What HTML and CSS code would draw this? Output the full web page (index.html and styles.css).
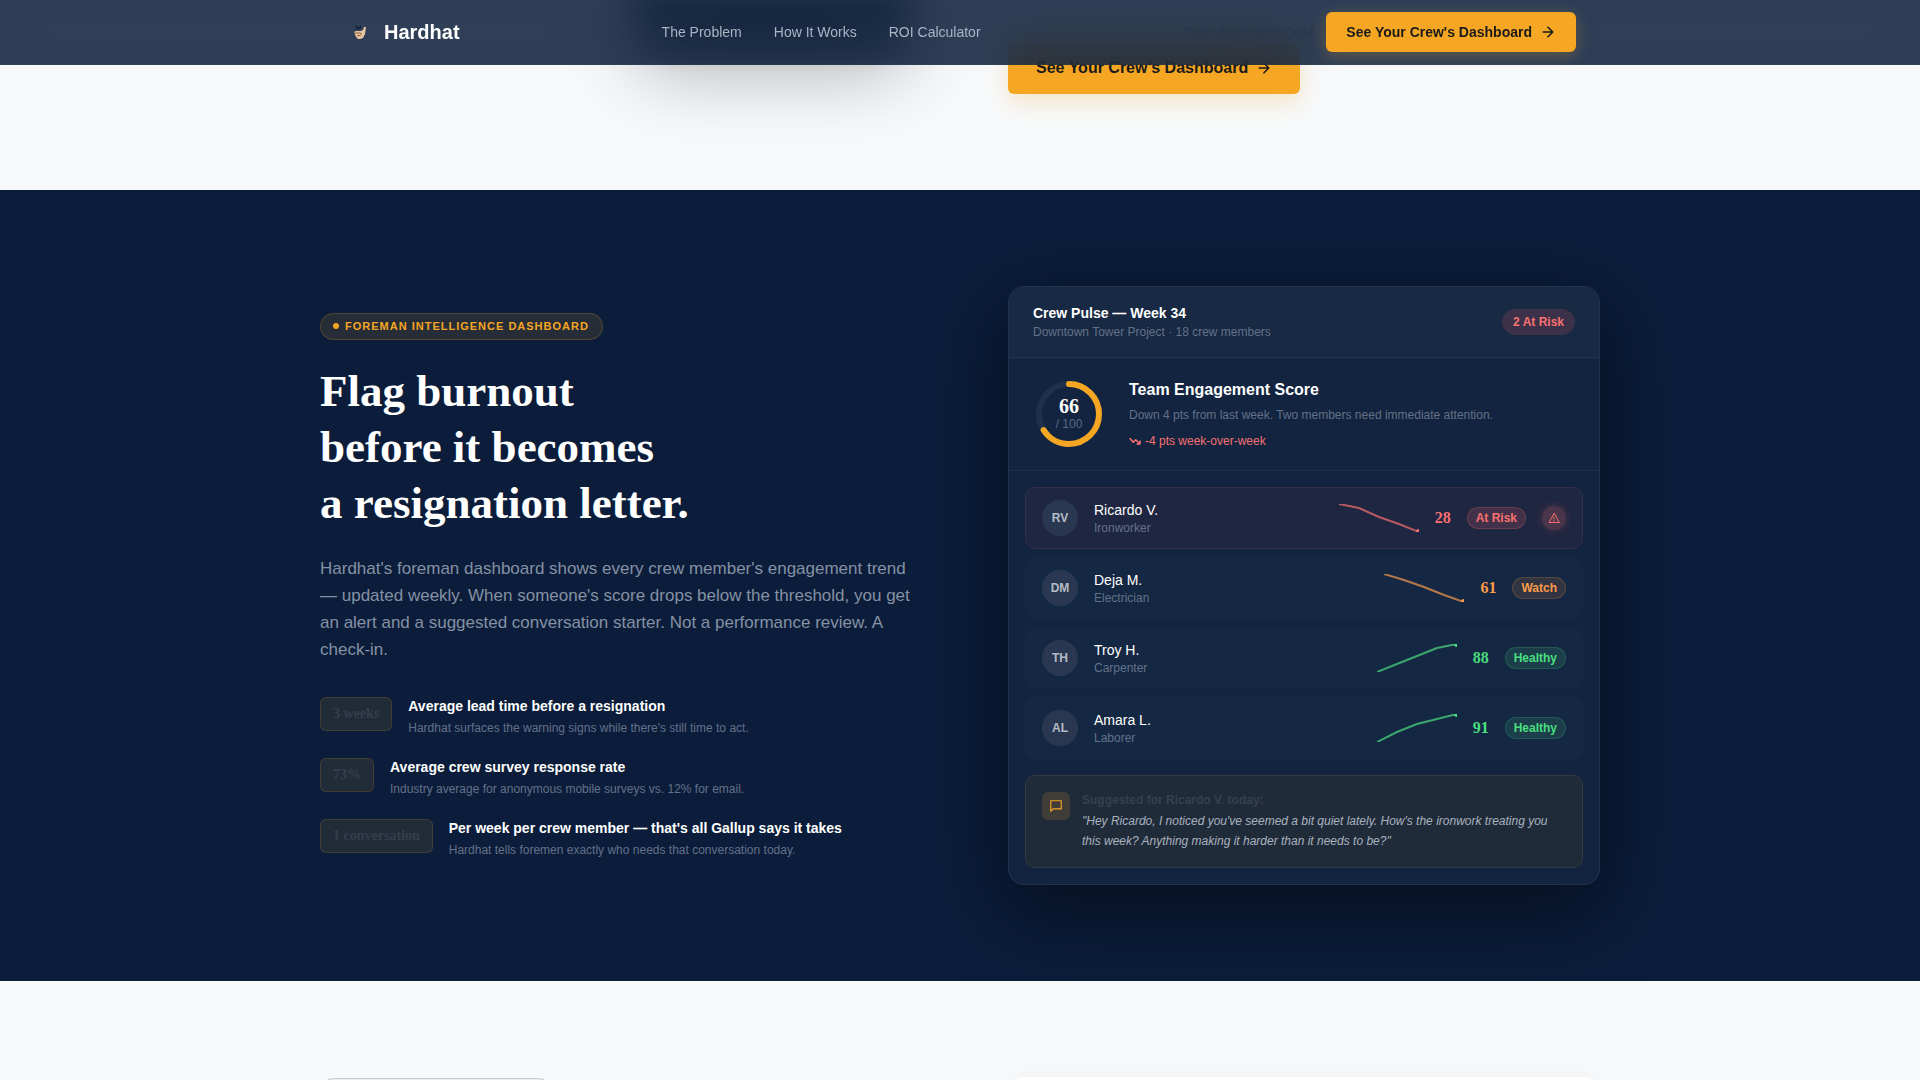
FILE: index.html
```html
<!DOCTYPE html>
<html lang="en">
<head>
    <meta charset="UTF-8">
    <meta name="viewport" content="width=device-width, initial-scale=1.0">
    <title>Hardhat</title>
    <link rel="stylesheet" href="styles.css">
</head>
<body>

    <!-- Navigation -->
    <header class="navbar">
        <div class="navbar-inner">
            <a class="logo" href="#">
                <span class="logo-mark">
                    <svg width="14" height="14" viewBox="0 0 14 14" aria-hidden="true">
                        <path d="M3 1l2 3M8 1L6 4" stroke="#15233d" stroke-width="2"/>
                        <path d="M1 7l2-1h5l2-1 1-3h2l-1 7-2 4-3 1H5l-2-2z" fill="#e9c4a0"/>
                        <path d="M1 8h6l2 1M4 11l4-1" stroke="#8a5f45" stroke-width="1" fill="none"/>
                    </svg>
                </span>
                Hardhat
            </a>
            <nav class="nav-links">
                <a href="#problem">The Problem</a>
                <a href="#how">How It Works</a>
                <a href="#roi">ROI Calculator</a>
            </nav>
            <div class="nav-actions">
                <a class="nav-cost" href="#cost">Calculate Your Cost</a>
                <button class="btn btn-small" type="button">
                    See Your Crew's Dashboard
                    <svg class="icon" width="16" height="16" viewBox="0 0 20 20"><path d="M4 10h12M10 4l6 6-6 6"/></svg>
                </button>
            </div>
        </div>
    </header>

    <!-- End of the survey section -->
    <section class="survey">
        <div class="container survey-grid">
            <div class="phone-wrap"><div class="phone"></div></div>
            <div>
                <button class="btn btn-large" type="button">
                    See Your Crew's Dashboard
                    <svg class="icon" width="16" height="16" viewBox="0 0 20 20"><path d="M4 10h12M10 4l6 6-6 6"/></svg>
                </button>
            </div>
        </div>
    </section>

    <!-- Foreman dashboard -->
    <section class="foreman" id="how">
        <div class="container foreman-grid">
            <div>
                <span class="eyebrow">Foreman Intelligence Dashboard</span>
                <h2>Flag burnout<br>before it becomes<br>a resignation letter.</h2>
                <p class="lead">Hardhat's foreman dashboard shows every crew member's engagement trend — updated weekly. When someone's score drops below the threshold, you get an alert and a suggested conversation starter. Not a performance review. A check-in.</p>
                <ul class="stats">
                    <li>
                        <span class="stat-value">3 weeks</span>
                        <div>
                            <h3>Average lead time before a resignation</h3>
                            <p>Hardhat surfaces the warning signs while there's still time to act.</p>
                        </div>
                    </li>
                    <li>
                        <span class="stat-value">73%</span>
                        <div>
                            <h3>Average crew survey response rate</h3>
                            <p>Industry average for anonymous mobile surveys vs. 12% for email.</p>
                        </div>
                    </li>
                    <li>
                        <span class="stat-value">1 conversation</span>
                        <div>
                            <h3>Per week per crew member — that's all Gallup says it takes</h3>
                            <p>Hardhat tells foremen exactly who needs that conversation today.</p>
                        </div>
                    </li>
                </ul>
            </div>

            <div class="pulse">
                <div class="pulse-head">
                    <div>
                        <h3>Crew Pulse — Week 34</h3>
                        <p>Downtown Tower Project · 18 crew members</p>
                    </div>
                    <span class="risk-count">2 At Risk</span>
                </div>

                <div class="score">
                    <div class="ring">
                        <svg width="70" height="70" viewBox="0 0 70 70">
                            <circle class="ring-track" cx="35" cy="35" r="30"/>
                            <circle class="ring-value" cx="35" cy="35" r="30" pathLength="100" stroke-dasharray="66 100" transform="rotate(-90 35 35)"/>
                        </svg>
                        <div class="ring-label"><strong>66</strong><span>/ 100</span></div>
                    </div>
                    <div>
                        <h3>Team Engagement Score</h3>
                        <p>Down 4 pts from last week. Two members need immediate attention.</p>
                        <div class="trend">
                            <svg class="icon" width="12" height="12" viewBox="0 0 24 24"><path d="M22 18l-8.500-8.500-5 5L2 7M16 18h6v-6"/></svg>
                            -4 pts week-over-week
                        </div>
                    </div>
                </div>

                <ul class="crew">
                    <li class="member risk">
                        <span class="avatar">RV</span>
                        <div class="who"><b>Ricardo V.</b><small>Ironworker</small></div>
                        <svg class="spark" width="80" height="28" viewBox="0 0 80 28">
                            <polyline points="0,0 20,4 40,13 60,20 80,28"/>
                            <circle cx="80" cy="28" r="3"/>
                        </svg>
                        <span class="points">28</span>
                        <span class="tag">At Risk</span>
                        <span class="alert">
                            <svg class="icon" width="12" height="12" viewBox="0 0 24 24"><path d="M12 3L2 21h20zM12 10v4M12 17v1"/></svg>
                        </span>
                    </li>
                    <li class="member watch">
                        <span class="avatar">DM</span>
                        <div class="who"><b>Deja M.</b><small>Electrician</small></div>
                        <svg class="spark" width="80" height="28" viewBox="0 0 80 28">
                            <polyline points="0,0 20,6 40,13 60,21 80,28"/>
                            <circle cx="80" cy="28" r="3"/>
                        </svg>
                        <span class="points">61</span>
                        <span class="tag">Watch</span>
                    </li>
                    <li class="member healthy">
                        <span class="avatar">TH</span>
                        <div class="who"><b>Troy H.</b><small>Carpenter</small></div>
                        <svg class="spark" width="80" height="28" viewBox="0 0 80 28">
                            <polyline points="0,28 20,20 40,12 60,4 80,0"/>
                            <circle cx="80" cy="0" r="3"/>
                        </svg>
                        <span class="points">88</span>
                        <span class="tag">Healthy</span>
                    </li>
                    <li class="member healthy">
                        <span class="avatar">AL</span>
                        <div class="who"><b>Amara L.</b><small>Laborer</small></div>
                        <svg class="spark" width="80" height="28" viewBox="0 0 80 28">
                            <polyline points="0,28 20,18 40,10 60,5 80,0"/>
                            <circle cx="80" cy="0" r="3"/>
                        </svg>
                        <span class="points">91</span>
                        <span class="tag">Healthy</span>
                    </li>
                </ul>

                <div class="suggestion">
                    <span class="suggestion-icon">
                        <svg class="icon" width="14" height="14" viewBox="0 0 24 24"><path d="M21 3H3v18l4-4h14z"/></svg>
                    </span>
                    <div>
                        <h4>Suggested for Ricardo V. today:</h4>
                        <p>"Hey Ricardo, I noticed you've seemed a bit quiet lately. How's the ironwork treating you this week? Anything making it harder than it needs to be?"</p>
                    </div>
                </div>
            </div>
        </div>
    </section>

    <!-- ROI section -->
    <section class="roi" id="roi">
        <div class="container roi-grid">
            <div><div class="roi-pill"></div></div>
            <div class="roi-card"></div>
        </div>
    </section>

</body>
</html>
```
FILE: styles.css
```css
* {
    box-sizing: border-box;
    margin: 0;
    padding: 0;
}

body {
    height: 100vh;
    overflow: hidden;
    font-family: "Liberation Sans", Arial, sans-serif;
    background-color: #f7f9fb;
    color: #fff;
}

a {
    color: inherit;
    text-decoration: none;
}

ul {
    list-style: none;
}

.icon {
    flex-shrink: 0;
    fill: none;
    stroke: currentColor;
    stroke-width: 2;
    stroke-linecap: round;
    stroke-linejoin: round;
}

.container {
    max-width: 1280px;
    margin: 0 auto;
}

/* Navigation */
.navbar {
    position: fixed;
    top: 0;
    left: 0;
    right: 0;
    z-index: 10;
    background-color: rgba(11, 29, 58, 0.85);
    backdrop-filter: blur(20px);
    border-bottom: 1px solid rgba(255, 255, 255, 0.02);
}

.navbar-inner {
    display: flex;
    align-items: center;
    justify-content: space-between;
    max-width: 1280px;
    height: 64px;
    margin: 0 auto;
    padding: 0 24px;
}

.logo {
    display: flex;
    align-items: center;
    gap: 8px;
    font-size: 20px;
    font-weight: bold;
}

.logo-mark {
    display: flex;
    align-items: center;
    justify-content: center;
    width: 32px;
    height: 32px;
}

.nav-links {
    display: flex;
    gap: 32px;
    font-size: 14px;
    color: #a9b4c4;
}

.nav-actions {
    display: flex;
    align-items: center;
    gap: 12px;
}

.nav-cost {
    font-size: 14px;
    font-weight: bold;
    color: #2a384c;
}

.btn {
    display: flex;
    align-items: center;
    gap: 8px;
    border: none;
    border-radius: 6px;
    background-color: #f5a623;
    color: #1a1a1a;
    font-family: inherit;
    font-weight: bold;
    cursor: pointer;
}

.btn-small {
    height: 40px;
    padding: 0 20px;
    font-size: 14px;
    box-shadow: 0 4px 16px rgba(245, 166, 35, 0.25);
}

.btn-large {
    height: 52px;
    padding: 0 28px;
    font-size: 16px;
    box-shadow: 0 8px 24px rgba(245, 166, 35, 0.25);
}

/* Survey */
.survey {
    padding-bottom: 96px;
}

.survey-grid,
.foreman-grid,
.roi-grid {
    display: grid;
    grid-template-columns: 1fr 1fr;
    gap: 96px;
}

.survey-grid {
    align-items: end;
    height: 94px;
}

.phone-wrap {
    display: flex;
    justify-content: flex-end;
    height: 94px;
}

.phone {
    width: 280px;
    height: 44px;
    border-radius: 0 0 32px 32px;
    background-color: #3a4048;
    box-shadow: 0 20px 72px rgba(0, 0, 0, 0.4);
    filter: blur(14px);
}

/* Foreman dashboard */
.foreman {
    padding: 96px 0;
    overflow: hidden;
    background-color: #0b1d3a;
}

.foreman-grid {
    align-items: center;
}

.eyebrow {
    display: flex;
    align-items: center;
    gap: 6px;
    width: fit-content;
    height: 27px;
    padding: 0 13px 0 12px;
    border: 1px solid rgba(245, 166, 35, 0.2);
    border-radius: 14px;
    background-color: rgba(245, 166, 35, 0.12);
    color: #f5a623;
    font-size: 11px;
    font-weight: bold;
    letter-spacing: 1px;
    text-transform: uppercase;
}

.eyebrow::before {
    content: "";
    width: 6px;
    height: 6px;
    border-radius: 50%;
    background-color: #f5a623;
}

.foreman h2 {
    margin: 23px 0 24px;
    font-family: "Liberation Serif", "Times New Roman", serif;
    font-size: 45px;
    line-height: 56px;
}

.lead {
    color: #8591a4;
    font-size: 17px;
    line-height: 27px;
}

.stats {
    display: flex;
    flex-direction: column;
    gap: 20px;
    margin-top: 33px;
}

.stats li {
    display: flex;
    align-items: flex-start;
    gap: 16px;
}

.stat-value {
    height: 34px;
    margin-top: 1px;
    padding: 0 12px;
    border: 1px solid rgba(245, 166, 35, 0.15);
    border-radius: 6px;
    background-color: rgba(245, 166, 35, 0.1);
    color: #343e4c;
    font-family: "Liberation Serif", "Times New Roman", serif;
    font-size: 14px;
    font-weight: bold;
    line-height: 32px;
}

.stats h3 {
    font-size: 14px;
    line-height: 21px;
}

.stats p {
    margin-top: 2px;
    color: #63718a;
    font-size: 12px;
    line-height: 18px;
}

/* Crew pulse card */
.pulse {
    border: 1px solid #22334d;
    border-radius: 16px;
    background-color: #12243f;
    box-shadow: 0 24px 80px rgba(0, 0, 0, 0.5);
    overflow: hidden;
}

.pulse-head {
    display: flex;
    align-items: center;
    justify-content: space-between;
    padding: 16px 24px;
    border-bottom: 1px solid #22334d;
    background-color: #172943;
}

.pulse-head h3 {
    font-size: 14px;
    line-height: 21px;
}

.pulse-head p,
.score p {
    color: #63718a;
    font-size: 12px;
    line-height: 18px;
}

.pulse-head p {
    line-height: 17px;
}

.risk-count {
    padding: 0 10px;
    border: 1px solid #413349;
    border-radius: 13px;
    background-color: #3b3148;
    color: #f87171;
    font-size: 12px;
    font-weight: bold;
    line-height: 24px;
}

.score {
    display: flex;
    align-items: center;
    gap: 24px;
    padding: 20px 24px;
    border-bottom: 1px solid #1d2e49;
}

.ring {
    position: relative;
    width: 72px;
    height: 70px;
    text-align: center;
}

.ring circle {
    fill: none;
    stroke-width: 6;
}

.ring .ring-track {
    stroke: #1f304b;
}

.ring .ring-value {
    stroke: #f5a623;
    stroke-linecap: round;
}

.ring-label {
    position: absolute;
    inset: 0;
    display: flex;
    flex-direction: column;
    justify-content: center;
}

.ring-label strong {
    font-family: "Liberation Serif", "Times New Roman", serif;
    font-size: 20px;
    line-height: 20px;
}

.ring-label span {
    color: #5b6980;
    font-size: 12px;
    line-height: 16px;
}

.score h3 {
    margin-bottom: 4px;
    font-size: 16px;
    line-height: 24px;
}

.trend {
    display: flex;
    align-items: center;
    gap: 4px;
    margin-top: 8px;
    color: #f87171;
    font-size: 12px;
    line-height: 18px;
}

.trend .icon {
    stroke-width: 3;
}

.crew {
    display: flex;
    flex-direction: column;
    gap: 8px;
    padding: 16px;
}

.member {
    display: flex;
    align-items: center;
    gap: 16px;
    padding: 12px 16px;
    border: 1px solid #152843;
    border-radius: 10px;
    background-color: #152843;
    color: var(--status);
}

.risk {
    --status: #f87171;
    --status-bg: rgba(248, 113, 113, 0.16);
    --status-line: rgba(248, 113, 113, 0.2);
    border-color: #352e47;
    background-color: #1f2641;
}

.watch {
    --status: #fb9a4b;
    --status-bg: rgba(251, 146, 60, 0.12);
    --status-line: rgba(251, 146, 60, 0.2);
}

.healthy {
    --status: #4ade80;
    --status-bg: rgba(74, 222, 128, 0.12);
    --status-line: rgba(74, 222, 128, 0.18);
}

.avatar {
    width: 36px;
    border-radius: 50%;
    background-color: #293850;
    color: #b4bbc6;
    font-size: 12px;
    font-weight: bold;
    line-height: 36px;
    text-align: center;
}

.who {
    flex: 1;
}

.who b,
.who small {
    display: block;
}

.who b {
    color: #fff;
    font-size: 14px;
    font-weight: normal;
    line-height: 20px;
}

.who small {
    color: #63718a;
    font-size: 12px;
    line-height: 16px;
}

.spark polyline {
    fill: none;
    stroke: currentColor;
    stroke-width: 2;
    stroke-linecap: round;
    stroke-linejoin: round;
    opacity: 0.7;
}

.spark circle {
    fill: currentColor;
}

.points {
    font-family: "Liberation Serif", "Times New Roman", serif;
    font-size: 16px;
    font-weight: bold;
}

.tag {
    padding: 0 8px;
    border: 1px solid var(--status-line);
    border-radius: 11px;
    background-color: var(--status-bg);
    font-size: 12px;
    font-weight: bold;
    line-height: 20px;
}

.alert {
    display: flex;
    align-items: center;
    justify-content: center;
    width: 24px;
    height: 24px;
    border-radius: 50%;
    background-color: rgba(248, 113, 113, 0.2);
    box-shadow: 0 0 8px rgba(248, 113, 113, 0.2);
}

.suggestion {
    display: flex;
    align-items: flex-start;
    gap: 12px;
    margin: 0 16px 16px;
    padding: 16px;
    border: 1px solid #333b41;
    border-radius: 10px;
    background-color: #202b3a;
}

.suggestion-icon {
    display: flex;
    flex-shrink: 0;
    align-items: center;
    justify-content: center;
    width: 28px;
    height: 28px;
    border-radius: 6px;
    background-color: #403c38;
    color: #f5a623;
}

.suggestion h4 {
    margin-bottom: 2px;
    color: #354050;
    font-size: 12px;
    line-height: 17px;
}

.suggestion p {
    color: #a9b2bf;
    font-size: 12px;
    font-style: italic;
    line-height: 20px;
}

/* ROI */
.roi {
    padding-top: 96px;
}

.roi-pill {
    width: 232px;
    height: 27px;
    margin-top: 1px;
    border: 1px solid #c4c8ce;
    border-radius: 14px;
    background-color: #eceef0;
}

.roi-card {
    height: 480px;
    border-radius: 16px;
    background-color: #fff;
    box-shadow: 0 4px 24px rgba(0, 0, 0, 0.06);
}
```
